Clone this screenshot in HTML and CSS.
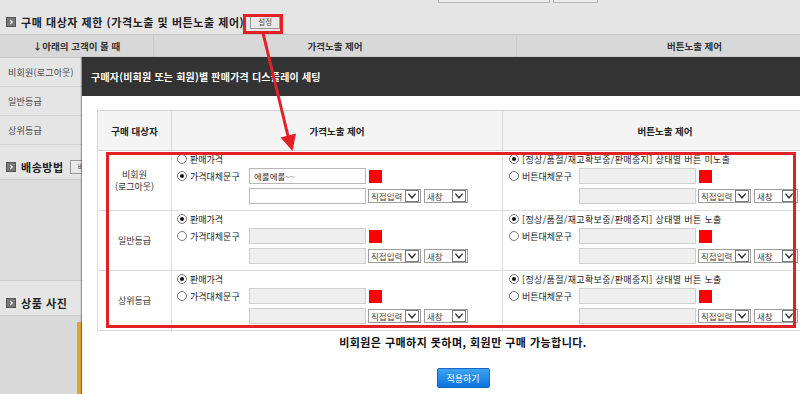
FILE: index.html
```html
<!DOCTYPE html>
<html lang="ko">
<head>
  <meta charset="UTF-8">
  <meta name="viewport" content="width=device-width, initial-scale=1.0">
  <title>구매 대상자 제한</title>
  <link rel="stylesheet" href="styles.css">
</head>
<body>
  <!-- page behind the popup -->
  <div class="page">
    <div class="top-strip">
      <span class="stub stub-input"></span>
      <span class="stub stub-btn"></span>
    </div>

    <div class="sec-head">
      <span class="sec-icon"><svg viewBox="0 0 10 10"><path d="M4 2.5 L6.5 5 L4 7.5" fill="none" stroke="#fff" stroke-width="1.4"/></svg></span>
      <h2>구매 대상자 제한 (가격노출 및 버튼노출 제어)</h2>
      <span class="btn-mini">설정</span>
    </div>

    <table class="bg-table">
      <thead>
        <tr>
          <th class="c1">↓아래의 고객이 볼 때</th>
          <th class="c2">가격노출 제어</th>
          <th class="c3">버튼노출 제어</th>
        </tr>
      </thead>
      <tbody>
        <tr><td class="c1">비회원(로그아웃)</td><td></td><td></td></tr>
        <tr><td class="c1">일반등급</td><td></td><td></td></tr>
        <tr><td class="c1">상위등급</td><td></td><td></td></tr>
      </tbody>
    </table>

    <div class="sec-head sec-low">
      <span class="sec-icon"><svg viewBox="0 0 10 10"><path d="M4 2.5 L6.5 5 L4 7.5" fill="none" stroke="#fff" stroke-width="1.4"/></svg></span>
      <h2>배송방법</h2>
      <span class="btn-mini">배송</span>
    </div>
    <div class="bg-panel"></div>
    <div class="sec-head sec-low">
      <span class="sec-icon"><svg viewBox="0 0 10 10"><path d="M4 2.5 L6.5 5 L4 7.5" fill="none" stroke="#fff" stroke-width="1.4"/></svg></span>
      <h2>상품 사진</h2>
    </div>
    <div class="bg-bottom"><span class="orange-bar"></span></div>
  </div>

  <!-- popup -->
  <div class="modal">
    <div class="modal-head">구매자(비회원 또는 회원)별 판매가격 디스플레이 세팅</div>
    <div class="modal-body">
      <table class="grid">
        <thead>
          <tr>
            <th class="g1">구매 대상자</th>
            <th class="g2">가격노출 제어</th>
            <th class="g3">버튼노출 제어</th>
          </tr>
        </thead>
        <tbody>
          <tr>
            <td class="who">비회원<br>(로그아웃)</td>
            <td class="ctl">
              <div class="line"><span class="radio"></span><span class="lbl">판매가격</span></div>
              <div class="line">
                <span class="opt"><span class="radio on"></span><span class="lbl">가격대체문구</span></span>
                <span class="inp">에룰에룰~~</span><span class="swatch"></span>
              </div>
              <div class="line line3">
                <span class="inp"></span>
                <span class="sel s1">직접입력<i><svg viewBox="0 0 10 8"><path d="M2 2 L5 5.5 L8 2" fill="none" stroke="#333" stroke-width="1.2"/></svg></i></span>
                <span class="sel s2">새창<i><svg viewBox="0 0 10 8"><path d="M2 2 L5 5.5 L8 2" fill="none" stroke="#333" stroke-width="1.2"/></svg></i></span>
              </div>
            </td>
            <td class="ctl ctl-btn">
              <div class="line"><span class="radio on"></span><span class="lbl">[정상/품절/재고확보중/판매중지] 상태별 버튼 미노출</span></div>
              <div class="line">
                <span class="opt"><span class="radio"></span><span class="lbl">버튼대체문구</span></span>
                <span class="inp off"></span><span class="swatch"></span>
              </div>
              <div class="line line3">
                <span class="inp off"></span>
                <span class="sel s1">직접입력<i><svg viewBox="0 0 10 8"><path d="M2 2 L5 5.5 L8 2" fill="none" stroke="#333" stroke-width="1.2"/></svg></i></span>
                <span class="sel s2">새창<i><svg viewBox="0 0 10 8"><path d="M2 2 L5 5.5 L8 2" fill="none" stroke="#333" stroke-width="1.2"/></svg></i></span>
              </div>
            </td>
          </tr>
          <tr>
            <td class="who">일반등급</td>
            <td class="ctl">
              <div class="line"><span class="radio on"></span><span class="lbl">판매가격</span></div>
              <div class="line">
                <span class="opt"><span class="radio"></span><span class="lbl">가격대체문구</span></span>
                <span class="inp off"></span><span class="swatch"></span>
              </div>
              <div class="line line3">
                <span class="inp off"></span>
                <span class="sel s1">직접입력<i><svg viewBox="0 0 10 8"><path d="M2 2 L5 5.5 L8 2" fill="none" stroke="#333" stroke-width="1.2"/></svg></i></span>
                <span class="sel s2">새창<i><svg viewBox="0 0 10 8"><path d="M2 2 L5 5.5 L8 2" fill="none" stroke="#333" stroke-width="1.2"/></svg></i></span>
              </div>
            </td>
            <td class="ctl ctl-btn">
              <div class="line"><span class="radio on"></span><span class="lbl">[정상/품절/재고확보중/판매중지] 상태별 버튼 노출</span></div>
              <div class="line">
                <span class="opt"><span class="radio"></span><span class="lbl">버튼대체문구</span></span>
                <span class="inp off"></span><span class="swatch"></span>
              </div>
              <div class="line line3">
                <span class="inp off"></span>
                <span class="sel s1">직접입력<i><svg viewBox="0 0 10 8"><path d="M2 2 L5 5.5 L8 2" fill="none" stroke="#333" stroke-width="1.2"/></svg></i></span>
                <span class="sel s2">새창<i><svg viewBox="0 0 10 8"><path d="M2 2 L5 5.5 L8 2" fill="none" stroke="#333" stroke-width="1.2"/></svg></i></span>
              </div>
            </td>
          </tr>
          <tr>
            <td class="who">상위등급</td>
            <td class="ctl">
              <div class="line"><span class="radio on"></span><span class="lbl">판매가격</span></div>
              <div class="line">
                <span class="opt"><span class="radio"></span><span class="lbl">가격대체문구</span></span>
                <span class="inp off"></span><span class="swatch"></span>
              </div>
              <div class="line line3">
                <span class="inp off"></span>
                <span class="sel s1">직접입력<i><svg viewBox="0 0 10 8"><path d="M2 2 L5 5.5 L8 2" fill="none" stroke="#333" stroke-width="1.2"/></svg></i></span>
                <span class="sel s2">새창<i><svg viewBox="0 0 10 8"><path d="M2 2 L5 5.5 L8 2" fill="none" stroke="#333" stroke-width="1.2"/></svg></i></span>
              </div>
            </td>
            <td class="ctl ctl-btn">
              <div class="line"><span class="radio on"></span><span class="lbl">[정상/품절/재고확보중/판매중지] 상태별 버튼 노출</span></div>
              <div class="line">
                <span class="opt"><span class="radio"></span><span class="lbl">버튼대체문구</span></span>
                <span class="inp off"></span><span class="swatch"></span>
              </div>
              <div class="line line3">
                <span class="inp off"></span>
                <span class="sel s1">직접입력<i><svg viewBox="0 0 10 8"><path d="M2 2 L5 5.5 L8 2" fill="none" stroke="#333" stroke-width="1.2"/></svg></i></span>
                <span class="sel s2">새창<i><svg viewBox="0 0 10 8"><path d="M2 2 L5 5.5 L8 2" fill="none" stroke="#333" stroke-width="1.2"/></svg></i></span>
              </div>
            </td>
          </tr>
        </tbody>
      </table>
      <p class="notice">비회원은 구매하지 못하며, 회원만 구매 가능합니다.</p>
      <button class="apply">적용하기</button>
    </div>
  </div>

  <!-- red annotation marks -->
  <div class="mark mark-btn"></div>
  <div class="mark mark-rows"></div>
  <svg class="arrow" viewBox="0 0 800 394">
    <line x1="263" y1="33" x2="288" y2="136" stroke="#e42027" stroke-width="3"/>
    <polygon points="292.5,151 296,133.5 280.5,137.5" fill="#e42027"/>
  </svg>
</body>
</html>
```

FILE: styles.css
```css
html, body {
  margin: 0;
  padding: 0;
  overflow: hidden;
}
body {
  position: relative;
  width: 800px;
  height: 394px;
  background: #e5e5e5;
  font-family: "Noto Sans CJK KR", "Noto Sans", sans-serif;
  font-size: 9px;
  color: #333;
}

/* background page */
.page {
  width: 873px;
}
.top-strip {
  height: 10px;
  display: flex;
  gap: 3px;
  padding-left: 438px;
}
.stub {
  height: 2px;
  border: 1px solid #b4b4b4;
  border-top: 0;
  background: #ececec;
}
.stub-input {
  width: 110px;
}
.stub-btn {
  width: 43px;
}
.sec-head {
  height: 24px;
  display: flex;
  align-items: center;
  gap: 5px;
  padding-left: 6px;
}
.sec-head h2 {
  margin: 0;
  font-size: 11px;
  font-weight: bold;
  color: #222;
  letter-spacing: 0.55px;
}
.sec-icon {
  width: 10px;
  height: 10px;
  background: #777;
  border: 1px solid #555;
  box-sizing: border-box;
  display: flex;
}
.sec-icon svg {
  width: 100%;
  height: 100%;
}
.btn-mini {
  height: 12px;
  padding: 0 7px;
  border: 1px solid #9a9a9a;
  background: #e9e9e9;
  font-size: 7.5px;
  line-height: 12px;
  color: #555;
  margin-left: 1px;
}
.sec-low {
  height: 35px;
  padding-top: 10px;
  box-sizing: border-box;
  border-bottom: 1px solid #cdcdcd;
}
.bg-table {
  width: 873px;
  border-collapse: collapse;
  table-layout: fixed;
}
.bg-table th {
  height: 22px;
  padding: 0;
  background: #d8d8d8;
  border-top: 1px solid #c2c2c2;
  border-bottom: 1px solid #c8c8c8;
  border-right: 1px solid #cbcbcb;
  font-size: 9.5px;
  font-weight: bold;
  color: #333;
}
.bg-table .c1 {
  width: 153px;
}
.bg-table th.c2 {
  width: 362px;
}
.bg-table td {
  height: 28px;
  padding: 0;
  border-bottom: 1px solid #d2d2d2;
}
.bg-table td.c1 {
  padding-left: 8px;
  color: #444;
  font-size: 9px;
  letter-spacing: 0.2px;
}
.bg-panel {
  height: 100px;
  background: #dddddd;
  border-bottom: 1px solid #cdcdcd;
}
.bg-bottom {
  height: 80px;
  background: #dadada;
  padding-top: 6px;
  box-sizing: border-box;
}
.orange-bar {
  display: block;
  width: 5px;
  height: 80px;
  margin-left: 77px;
  background: #e2a236;
}

/* popup */
.modal {
  position: absolute;
  left: 82px;
  top: 57px;
  bottom: 0;
  width: 762px;
  background: #fff;
  box-shadow: -1px 0 1px rgba(0, 0, 0, 0.35);
}
.modal-head {
  height: 39px;
  background: #333;
  color: #fff;
  font-weight: bold;
  font-size: 10px;
  letter-spacing: 0.2px;
  display: flex;
  align-items: center;
  padding-left: 9px;
}
.modal-body {
  padding: 14px 15px 0;
}
.grid {
  width: 731px;
  border-collapse: collapse;
  table-layout: fixed;
}
.grid th {
  height: 39px;
  padding: 0;
  background: #f4f4f4;
  border: 1px solid #d4d4d4;
  font-size: 9.5px;
  font-weight: bold;
  color: #222;
}
.grid .g1 {
  width: 73px;
}
.grid .g2 {
  width: 330px;
}
.grid td {
  height: 58px;
  border: 1px solid #dcdcdc;
  vertical-align: top;
  padding: 0;
}
.grid td.who {
  vertical-align: middle;
  text-align: center;
  line-height: 12px;
  color: #333;
}
.ctl {
  padding: 1px 0 0 5px !important;
}
.ctl-btn {
  padding-left: 6px !important;
}
.line {
  display: flex;
  align-items: center;
  height: 16px;
  margin-bottom: 2px;
  white-space: nowrap;
}
.line:first-child {
  height: 14px;
}
.line3 {
  margin-top: 4px;
  padding-left: 72px;
}
.ctl-btn .line3 {
  padding-left: 70px;
}
.opt {
  display: flex;
  align-items: center;
  width: 72px;
}
.ctl-btn .opt {
  width: 70px;
}
.radio {
  width: 10px;
  height: 10px;
  border: 1px solid #7a7a7a;
  border-radius: 50%;
  box-sizing: border-box;
  background: #fff;
  position: relative;
  margin-right: 3px;
  flex: none;
}
.radio.on::after {
  content: "";
  position: absolute;
  left: 2px;
  top: 2px;
  width: 4px;
  height: 4px;
  border-radius: 50%;
  background: #111;
}
.lbl {
  font-size: 9px;
  color: #222;
}
.ctl-btn .line:first-child .lbl {
  letter-spacing: 0.35px;
}
.inp {
  width: 117px;
  height: 16px;
  box-sizing: border-box;
  border: 1px solid #b8b8b8;
  background: #fff;
  font-size: 8.5px;
  line-height: 14px;
  padding-left: 4px;
  color: #333;
}
.inp.off {
  background: #efefef;
  border-color: #cfcfcf;
}
.swatch {
  width: 13px;
  height: 13px;
  margin-left: 3px;
  background: #ff0000;
}
.sel {
  display: flex;
  align-items: center;
  justify-content: space-between;
  height: 14px;
  box-sizing: border-box;
  border: 1px solid #9d9d9d;
  background: #fff;
  font-size: 8.5px;
  color: #444;
  padding-left: 2px;
}
.sel.s1 {
  width: 53px;
  margin-left: 2px;
}
.sel.s2 {
  width: 44px;
  margin-left: 3px;
}
.sel i {
  width: 12px;
  height: 10px;
  border: 1px solid #7c7c7c;
  margin-right: 1px;
  display: flex;
}
.sel i svg {
  width: 100%;
  height: 100%;
}
.notice {
  margin: 4px 0 0;
  text-align: center;
  font-size: 11px;
  font-weight: bold;
  line-height: 14px;
  letter-spacing: 0.45px;
  color: #111;
}
.apply {
  display: block;
  margin: 19px auto 0;
  width: 53px;
  height: 20px;
  padding: 0;
  border: 1px solid #1a66c4;
  border-radius: 2px;
  background: linear-gradient(#3ea3f2, #0b74dc);
  color: #fff;
  font-family: inherit;
  font-size: 9px;
}

/* annotation overlay */
.mark {
  position: absolute;
  box-sizing: border-box;
  border: 3px solid #e42027;
}
.mark-btn {
  left: 243px;
  top: 14px;
  width: 40px;
  height: 20px;
}
.mark-rows {
  left: 106px;
  top: 152px;
  width: 690px;
  height: 176px;
}
.arrow {
  position: absolute;
  left: 0;
  top: 0;
  width: 800px;
  height: 394px;
}
```
